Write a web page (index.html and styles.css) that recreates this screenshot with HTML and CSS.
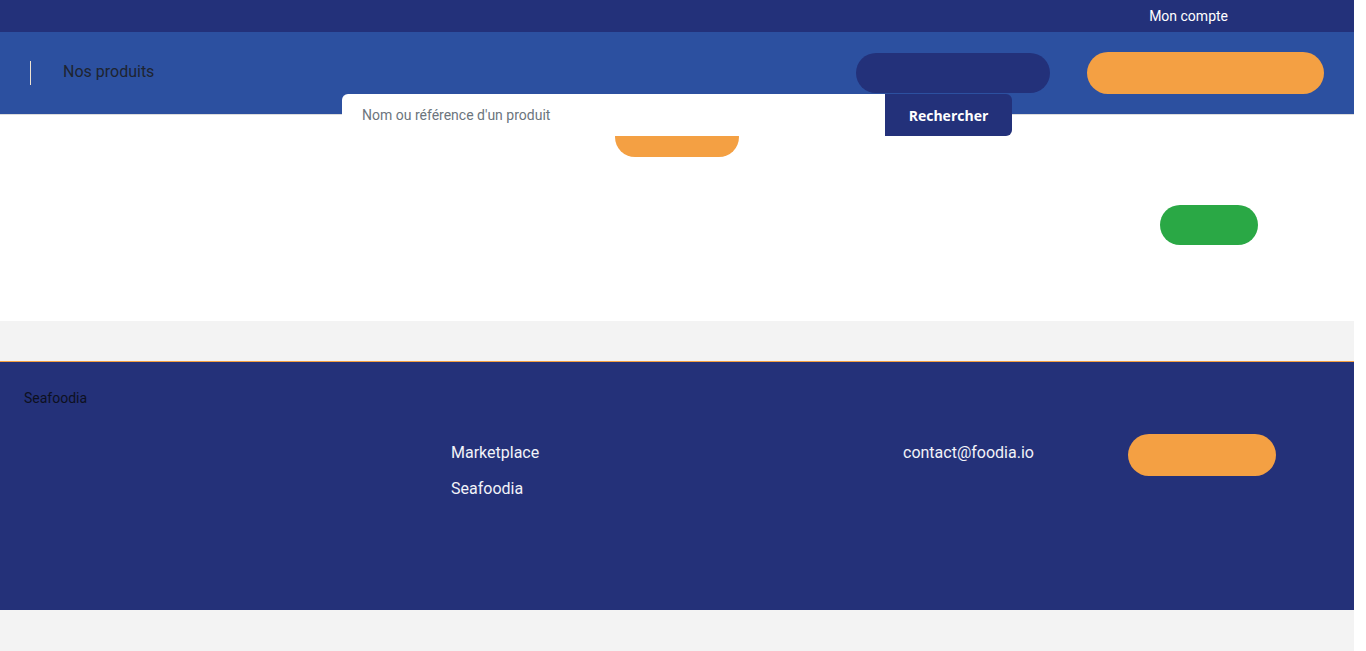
FILE: index.html
```html
<!DOCTYPE html>
<html lang="fr">
<head>
  <meta charset="UTF-8">
  <meta name="viewport" content="width=device-width, initial-scale=1.0">
  <title>Seafoodia - Nos produits</title>
  <link rel="stylesheet" href="styles.css">
</head>
<body>
  <div class="page">

    <!-- Top bar -->
    <div class="topbar">
      <a class="topbar-link" href="#">Mon compte</a>
    </div>

    <!-- Header -->
    <header class="header">
      <span class="header-divider"></span>
      <a class="header-link" href="#">Nos produits</a>
      <span class="pill pill-navy"></span>
      <span class="pill pill-orange"></span>

      <form class="search" onsubmit="return false">
        <input class="search-input" type="text" placeholder="Nom ou référence d'un produit">
        <button class="search-btn" type="submit">Rechercher</button>
      </form>
    </header>

    <!-- Main content -->
    <main class="content">
      <span class="pill pill-orange pill-small"></span>
      <span class="pill pill-green"></span>
    </main>

    <div class="band"></div>

    <!-- Footer -->
    <footer class="footer">
      <div class="footer-brand">Seafoodia</div>
      <div class="footer-row">
        <ul class="footer-links">
          <li><a href="#">Marketplace</a></li>
          <li><a href="#">Seafoodia</a></li>
        </ul>
        <div class="footer-contact">contact@foodia.io</div>
        <span class="pill pill-orange pill-footer"></span>
      </div>
    </footer>

    <div class="band band-bottom"></div>
  </div>
</body>
</html>
```

FILE: styles.css
```css
/* General styles */
body {
  margin: 0;
  padding: 0;
  background-color: #ffffff;
  font-family: Roboto, "Liberation Sans", Arial, sans-serif;
}

.page {
  width: 1354px;
}

a {
  text-decoration: none;
  color: inherit;
}

/* Pills */
.pill {
  display: block;
  flex-shrink: 0;
  height: 40px;
  border-radius: 21px;
}

.pill-navy {
  width: 194px;
  margin-left: auto;
  background-color: #23317a;
}

.pill-orange {
  width: 237px;
  height: 42px;
  background-color: #f4a043;
}

.pill-green {
  width: 98px;
  background-color: #2aa845;
}

/* Top bar */
.topbar {
  height: 32px;
  display: flex;
  align-items: center;
  justify-content: flex-end;
  padding-right: 126px;
  background-color: #23317a;
}

.topbar-link {
  color: #ffffff;
  font-size: 14px;
}

/* Header */
.header {
  position: relative;
  height: 82px;
  display: flex;
  align-items: center;
  padding-right: 30px;
  background-color: #2c50a0;
  border-bottom: 1px solid #dcdcdc;
}

.header-divider {
  width: 1px;
  height: 24px;
  margin-left: 30px;
  background-color: #efe3d0;
}

.header-link {
  margin-left: 32px;
  margin-top: -3px;
  color: #1e2430;
  font-size: 16px;
}

.header .pill-orange {
  margin-left: 37px;
}

/* Search box sits over the header edge */
.search {
  position: absolute;
  top: 62px;
  left: 342px;
  z-index: 2;
  display: flex;
  width: 670px;
  height: 42px;
}

.search-input {
  flex: 1;
  margin: 0;
  padding: 0 20px;
  border: none;
  border-radius: 6px 0 0 6px;
  background-color: #ffffff;
  font-family: Roboto, "Liberation Sans", Arial, sans-serif;
  font-size: 14px;
  color: #495057;
  outline: none;
}

.search-input::placeholder {
  color: #6c757d;
}

.search-btn {
  width: 127px;
  margin: 0;
  border: none;
  border-radius: 0 6px 6px 0;
  background-color: #23317a;
  color: #ffffff;
  font-family: "Open Sans", sans-serif;
  font-weight: 700;
  font-size: 14px;
}

/* Main content */
.content {
  height: 206px;
  display: flex;
  flex-direction: column;
}

.pill-small {
  width: 124px;
  height: 40px;
  margin: 2px 0 0 615px;
  border-radius: 20px;
}

.pill-green {
  margin: 48px 0 0 1160px;
}

.band {
  height: 40px;
  background-color: #f3f3f3;
}

.band-bottom {
  height: 41px;
}

/* Footer */
.footer {
  height: 249px;
  box-sizing: border-box;
  padding-top: 26px;
  background-color: #243179;
  border-top: 1px solid #f4a043;
}

.footer-brand {
  margin-left: 24px;
  line-height: 20px;
  font-size: 14px;
  color: #0d1020;
}

.footer-row {
  display: flex;
  margin-top: 26px;
  padding-left: 451px;
}

.footer-links {
  list-style-type: none;
  width: 452px;
  margin: 0;
  padding: 0;
}

.footer-links li {
  line-height: 36px;
  font-size: 16px;
  color: #f2f3f8;
}

.footer-links li:first-child {
  margin-top: 1px;
}

.footer-contact {
  width: 225px;
  margin-top: 1px;
  line-height: 36px;
  font-size: 16px;
  color: #f2f3f8;
}

.pill-footer {
  width: 148px;
}
```
